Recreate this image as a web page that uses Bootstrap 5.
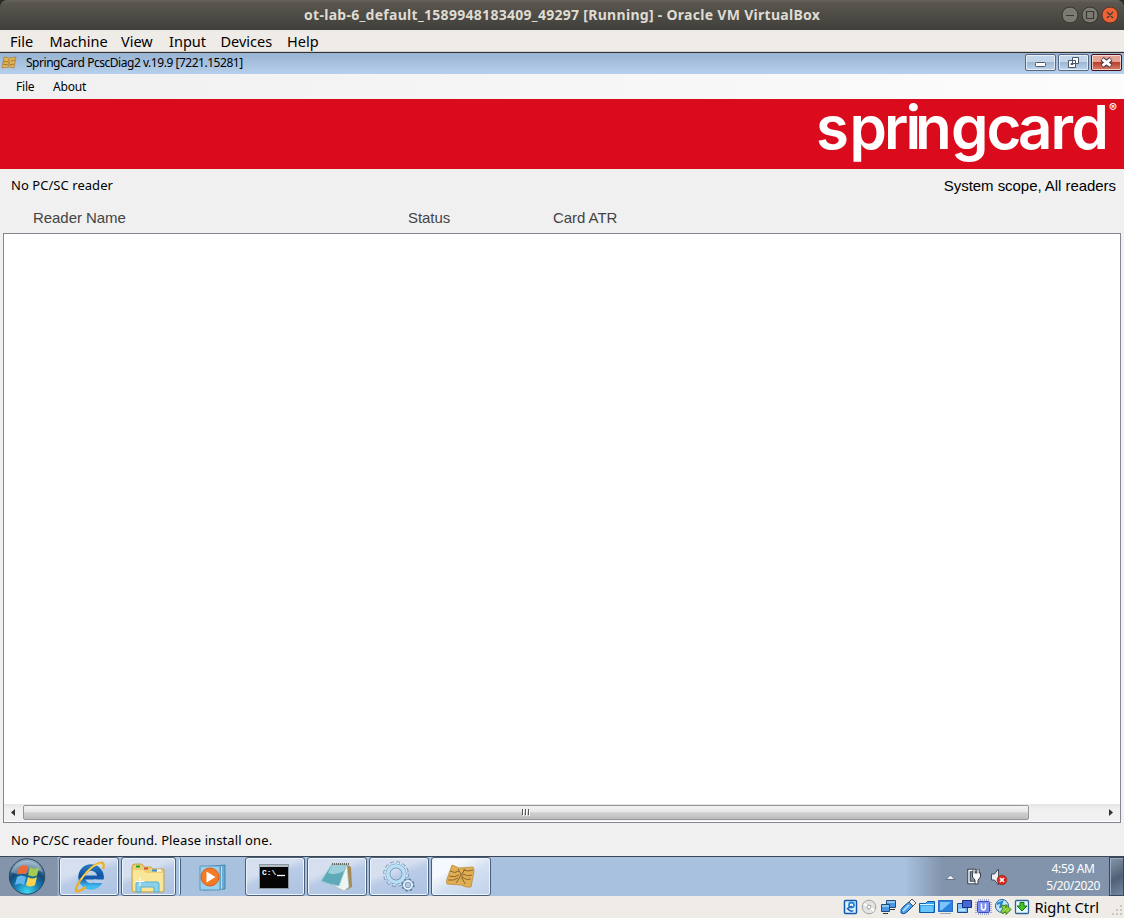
<!DOCTYPE html>
<html lang="en">
<head>
<meta charset="utf-8">
<meta name="viewport" content="width=device-width, initial-scale=1">
<title>ot-lab-6_default_1589948183409_49297 [Running] - Oracle VM VirtualBox</title>
<link rel="stylesheet" href="https://cdn.jsdelivr.net/npm/bootstrap@5.3.0/dist/css/bootstrap.min.css">
<style>
html,body{height:918px;overflow:hidden}
body{width:1124px;background:#2b2a28;font-family:"Noto Sans","Open Sans",sans-serif;color:#000;line-height:1;white-space:nowrap}
svg{display:block;flex:none;overflow:visible}
.host-title{height:30px;background:linear-gradient(#66635b 0,#59564f 3px,#403f3a);border-radius:7px 7px 0 0;color:#dfdbd2;font-size:14px;font-weight:700;letter-spacing:.29px}
.host-menu{height:23px;background:#efebe7;border-bottom:1px solid #33322f;box-shadow:inset 0 -1px #d3cfca;font-size:14.5px;padding-left:10px}
.win-title{height:21px;background:linear-gradient(#98b4d2,#b7cfea);font-size:12px}
.win-btn{height:17px;border:1px solid #58697f;border-radius:2px;box-shadow:inset 0 0 0 1px #ffffffa0;background:linear-gradient(#c3d5e9 0 45%,#9db8d4 50%,#bcd3ea)}
.win-btn.shut{border-color:#47111e;background:linear-gradient(#e5a394 0 45%,#b9402a 50%,#d7806c)}
.win-menu{height:25px;background:linear-gradient(90deg,#f0f0f0,#fcfcfc);font-size:12px;padding-left:16px}
.brand{height:70px;background:#d90b1d}
.panel{height:687px;background:#f0f0f0}
.scope{font:15px "Liberation Sans",sans-serif;letter-spacing:-.05px}
.heads{font:15px "Liberation Sans",sans-serif;color:#444;letter-spacing:-.05px}
.readers{height:590px;margin:0 3px;border:1px solid #828790;background:#fff}
.hscroll{height:17px;margin-bottom:1px;background:linear-gradient(#e4e4e4,#f0f0f0 30%,#f2f2f2)}
.thumb{width:1006px;height:15px;border:1px solid #979797;border-radius:2px;background:linear-gradient(#f4f4f4 0,#e6e6e6 45%,#d0d0d0 52%,#bdbdbd)}
.note{font-size:13px}
.taskbar{height:40px;border-top:1px solid #3c4755;background:linear-gradient(90deg,#8494aa 0 57px,#a8c1df 59px 905px,#8294ac 942px)}
.task{width:60px;height:39px;border:1px solid #4b5e78;border-radius:3px;box-shadow:inset 0 0 0 1px #edf4fc;background:linear-gradient(160deg,#d5dff0 0 35%,#b9cbe6 50%,#acc3e2)}
.task.current{background:linear-gradient(150deg,#f5f8fc 0 30%,#d4e0f1 55%,#bfd1ec)}
.clock{color:#fff;font-size:12px;line-height:17px}
.peek{width:15px;height:39px;border:1px solid #38475b;box-shadow:inset 1px 1px 0 #9babc0;background:linear-gradient(150deg,#8797ab,#506177 55%,#7689a1)}
.host-status{height:22px;background:#efebe7;font-size:14.7px}
</style>
</head>
<body>
<header class="host-title d-flex align-items-center">
  <span style="margin-left:304px">ot-lab-6_default_1589948183409_49297 [Running] - Oracle VM VirtualBox</span>
  <svg class="ms-auto" style="margin-right:5px" width="58" height="20">
    <g stroke="#34332f"><circle cx="9" cy="10" r="8" fill="#7c7a72"/><circle cx="29" cy="10" r="8" fill="#7c7a72"/><circle cx="49" cy="10" r="8" fill="#ed6236" stroke="#5c3021"/></g>
    <path d="M5 10.5h8M25.500 6.500h7v7h-7zM46 7l6 6m0-6-6 6" fill="none" stroke="#3b3934" stroke-width="1.2"/>
  </svg>
</header>
<nav class="host-menu d-flex align-items-center">
  <span style="width:39.500px">File</span><span style="width:71.500px">Machine</span><span style="width:48px">View</span><span style="width:51.500px">Input</span><span style="width:66.500px">Devices</span><span>Help</span>
</nav>
<div class="win-title d-flex align-items-center">
  <svg width="18" height="16" style="margin-right:8px;margin-top:-2px" viewBox="0 0 18 16"><path d="M4 2l5 1 7-1-2 11-5-1-7 1z" fill="#e2b257" stroke="#a57c35" stroke-width=".7"/><path d="M3 6l5 1M3 9l5 1m3-4 4-1m-5 5 4-1M9 4v7" fill="none" stroke="#8d6a2c" stroke-width=".8"/></svg>
  <span style="letter-spacing:-.47px;margin-top:-2px">SpringCard PcscDiag2 v.19.9 [7221.15281]</span>
  <div class="d-flex ms-auto" style="gap:2px;margin-right:2px;margin-top:-2px">
    <div class="win-btn" style="width:31px"><svg width="29" height="15"><rect x="9.500" y="7.500" width="10" height="4" rx="1" fill="#fff" stroke="#4c566b"/></svg></div>
    <div class="win-btn" style="width:31px"><svg width="29" height="15"><path d="M13.500 2.500h6v6h-6zM9.500 5.500h7v7h-7z" fill="#fff" stroke="#4c566b"/><path d="M12 8.500h2v1h-2z" fill="#7e9ebd" stroke="#4c566b"/></svg></div>
    <div class="win-btn shut" style="width:31px"><svg width="29" height="15"><path d="M10 4l9 7m0-7-9 7" stroke="#4c3747" stroke-width="5"/><path d="M10.500 4.300l8 6.400m0-6.400-8 6.400" stroke="#fff" stroke-width="2.800"/></svg></div>
  </div>
</div>
<nav class="win-menu d-flex align-items-center"><span style="width:37px;letter-spacing:-.2px">File</span><span style="letter-spacing:-.2px">About</span></nav>
<div class="brand d-flex justify-content-end">
  <svg width="324" height="70" fill="#fff" font-family="Inter,sans-serif">
    <text y="50" x="16 49.500 84 105.500 115 151 186.500 218 250.500 271.500" font-size="60" font-weight="600">springcard</text>
    <text x="309" y="13" font-size="12" font-weight="600">®</text>
  </svg>
</div>
<main class="panel d-flex flex-column">
  <div class="d-flex justify-content-between align-items-center" style="height:33px;padding:0 8px 0 11px">
    <span class="note" style="letter-spacing:.05px">No PC/SC reader</span><span class="scope">System scope, All readers</span>
  </div>
  <div class="heads d-flex align-items-center" style="height:31px;padding-left:33px"><span style="width:375px">Reader Name</span><span style="width:145px">Status</span><span>Card ATR</span></div>
  <div class="readers d-flex flex-column justify-content-end">
    <div class="hscroll d-flex align-items-center">
      <svg width="19" height="17"><path d="M11 5v7L7 8.500z" fill="#333"/></svg>
      <div class="thumb d-flex justify-content-center"><svg width="12" height="13"><path d="M2.500 3v6m3-6v6m3-6v6" stroke="#555"/><path d="M3.500 4v6m3-6v6m3-6v6" stroke="#fff"/></svg></div>
      <svg class="ms-auto" width="17" height="17"><path d="M6 5v7l4-3.500z" fill="#333"/></svg>
    </div>
  </div>
  <div class="note d-flex align-items-center flex-fill" style="padding:2px 0 0 11px;letter-spacing:.1px">No PC/SC reader found. Please install one.</div>
</main>
<div class="taskbar d-flex align-items-start">
  <svg width="57" height="39" style="margin-right:2px">
    <defs><radialGradient id="orb" cx=".5" cy=".95" r=".95"><stop stop-color="#3edcf4"/><stop offset=".35" stop-color="#1b83b8"/><stop offset=".65" stop-color="#124876"/><stop offset="1" stop-color="#9eb9cf"/></radialGradient></defs>
    <circle cx="27" cy="19.500" r="17.700" fill="url(#orb)" stroke="#29475f"/>
    <path d="M11 15a17 17 0 0 1 32 0q-8-3-16 1-8 3-16-1" fill="#fff" opacity=".3"/>
    <path d="M19 10q5-3 9-.5l-2 8q-5-2-9 .5z" fill="#ee6737"/><path d="M30 10q4 3 9 .5l-2 8q-5 2-9-.5z" fill="#a5cb50"/><path d="M17 20q4-3 9 0l-2 8q-4-3-9 0z" fill="#60b6ed"/><path d="M28 20q4 3 9 0l-2 8q-5 3-9 0z" fill="#ffd44c"/>
  </svg>
  <div class="task"><svg width="58" height="37"><defs><linearGradient id="ie" x2="0" y2="1"><stop stop-color="#2474bd"/><stop offset=".5" stop-color="#0b4c9d"/><stop offset="1" stop-color="#42bdf4"/></linearGradient></defs>
    <circle cx="31" cy="19" r="9.500" fill="none" stroke="url(#ie)" stroke-width="6.500"/><path d="M24 17.500h19.500v4H24z" fill="#145cab"/><path d="M34 21.500h11v3.500H34z" fill="#b9cbe6"/>
    <path d="M43 11c4-11-8-6-16 3C17 25 12 36 19 33q3-1 7-4" fill="none" stroke="#edad25" stroke-width="2.200"/><path d="M41 6c-5-1-15 7-20 16" fill="none" stroke="#ffe078"/></svg></div>
  <div class="task" style="width:55px;margin-left:2px"><svg width="53" height="37"><path d="M10 9q0-3 3-3h7l2 3h7l2 2h11v21q0 2-2 2H12q-2 0-2-2z" fill="#edd074" stroke="#c9a44e"/><path d="M11 12h10l3 3h17v18H11z" fill="#f8e699"/><path d="M14 7.500h4v2h-4z" fill="#18a634"/><path d="M22 9.500h4v2h-4z" fill="#d54b35"/><path d="M30 11.500h5v2h-5z" fill="#368ed7"/><path d="M35 11.500h4v2h-4z" fill="#fff"/><path d="M14 34v-8q0-2 2-2h19q2 0 2 2v8h-5v-5H19v5z" fill="#8bd1e9" stroke="#5aaecb"/><path d="M18 19v9m-4.500-4.500h9" stroke="#fff"/></svg></div>
  <div style="width:5px;height:39px;border-right:1px solid #4b5e78;border-radius:0 3px 3px 0;box-shadow:inset -1px 0 #edf4fc"></div>
  <svg width="65" height="39"><path d="M22 10l22-2v24l-22 1z" fill="#6aacd2" stroke="#4385ab"/><path d="M40.500 9v23" stroke="#b7dff2"/><path d="M19 9h20v24H19z" fill="#9bd0ec" stroke="#5898bf"/><circle cx="29" cy="20" r="9" fill="#f47a23" stroke="#df5a13"/><path d="M25.500 14.500v11l9-5.500z" fill="#fff"/></svg>
  <div class="task" style="margin-right:2px;margin-left:-1px"><svg width="58" height="37"><rect x="13.500" y="6.500" width="29" height="24" fill="#050505" stroke="#8c969e"/><path d="M14 7h28v2H14z" fill="#b5bdc4"/><text x="16" y="17" font-family="Liberation Mono,monospace" font-size="8" font-weight="700" fill="#fff">C:\</text><path d="M31 17.500h8" stroke="#fff" stroke-width="1.300"/></svg></div>
  <div class="task" style="margin-right:2px"><svg width="58" height="37"><path d="M38 6l5 3 1 20-6 3-4-4z" fill="#a58a55"/><path d="M39 7l2 22-5 4-12-6z" fill="#edf4f3" stroke="#a5b4b6" stroke-width=".7"/><path d="M24 6h15l-8 22q-9-1-18-5z" fill="#5faab9" stroke="#9bced3"/><path d="M24 7h14l-2 6q-9 5-16 2z" fill="#9ccfd9"/><path d="M24 6h17" stroke="#6c6c60" stroke-width="2" stroke-dasharray="1 1"/></svg></div>
  <div class="task" style="margin-right:2px"><svg width="58" height="37">
    <circle cx="26" cy="16" r="11" fill="none" stroke="#6f8fb0" stroke-width="3.600" stroke-dasharray="3.400 2.360"/><circle cx="26" cy="16" r="10.800" fill="none" stroke="#d3e9f6" stroke-width="2.400" stroke-dasharray="2.800 2.850" stroke-dashoffset="-.3"/><circle cx="26" cy="16" r="8" fill="none" stroke="#6f8fb0" stroke-width="4.600"/><circle cx="26" cy="16" r="8.200" fill="none" stroke="#b9e0f6" stroke-width="3.600"/>
    <circle cx="38" cy="27" r="5.600" fill="none" stroke="#5a7c9d" stroke-width="2" stroke-dasharray="2.200 2.200"/><circle cx="38" cy="27" r="4" fill="none" stroke="#5a7c9d" stroke-width="3"/><circle cx="38" cy="27" r="4" fill="none" stroke="#e0f3fb" stroke-width="2"/></svg></div>
  <div class="task current"><svg width="58" height="37"><path d="M20 7l7 3 14-1q1 1 1 5l-3 15q-4 1-10-2l-14-1q-1-3 0-5z" fill="#e0ae53" stroke="#bd8c3c" stroke-width=".8"/><path d="M18 13q5 3 9 0m-10 5q6 2 10-1M16 22q6 1 10-2m5-8q5 2 10 0m-10 4q5 3 9 1m-10 2q5 4 9 2M26 11l3 5-2 5-3 4m9-14-3 5v4l3 6" fill="none" stroke="#8d672c"/></svg></div>
  <svg class="ms-auto" width="70" height="39" style="margin-right:34px">
    <path d="M4 22.500 8.500 18l4.500 4.500z" fill="#f4f6f8" stroke="#647388"/>
    <path d="M34 13.500h-7v12h6" fill="none" stroke="#3a424c" stroke-width="3.400"/><path d="M34 13.500h-7v12h6" fill="none" stroke="#fff" stroke-width="1.400"/>
    <path d="M32 12v4m4-4v4" stroke="#3a424c" stroke-width="3"/><path d="M30.500 16h8v4l-2.500 3v4h-3v-4l-2.500-3z" fill="#fff" stroke="#3a424c"/><path d="M32 12.500V17m4-4.500V17" stroke="#fff" stroke-width="1.300"/>
    <path d="M49.500 17h3l4-5v16l-4-5h-3z" fill="#ecf0f3" stroke="#454d56"/><circle cx="60" cy="23" r="4.800" fill="#d8281e" stroke="#a1352f"/><path d="M58 21l4 4m0-4-4 4" stroke="#fff" stroke-width="1.600"/>
  </svg>
  <div class="clock d-flex flex-column align-items-center" style="margin:3px 9px 0 0;letter-spacing:-.35px"><span>4:59 AM</span><span>5/20/2020</span></div>
  <div class="peek"></div>
</div>
<footer class="host-status d-flex align-items-center justify-content-end">
  <svg width="190" height="20" style="margin-right:1px">
    <rect x="1.500" y="3.500" width="12" height="13" rx="1" fill="#dff3ff" stroke="#1258ac" stroke-width="1.500"/><circle cx="8.500" cy="8" r="2.500" fill="#fff" stroke="#2585d8" stroke-width="1.800"/><path d="M9 9l-4.500 2.500q3 4 6 2" fill="none" stroke="#155ba8" stroke-width="1.400"/>
    <circle cx="26" cy="10" r="6.800" fill="#e3e3e3" stroke="#a4a4a4"/><circle cx="26" cy="10" r="2" fill="#fff" stroke="#999"/><path d="M21 7l3 2m4 2 3 3" stroke="#fff" stroke-width="2"/>
    <path d="M43.500 3.500h9v7h-9z" fill="#4999e6" stroke="#234a7c"/><path d="M44 5h8" stroke="#d8f0ff"/><path d="M47 12.500h5" stroke="#333"/><path d="M38.500 7.500h8v7h-8z" fill="#4999e6" stroke="#234a7c"/><path d="M39 9h7" stroke="#d8f0ff"/><path d="M40 16.500h5" stroke="#333"/>
    <path d="M58 16q-1-4 3-7l5-4 4 4-6 6q-3 3-6 1z" fill="#4aa2ef" stroke="#154f95"/><path d="M66 5l3-3 4 4-3 3z" fill="#eee" stroke="#555"/><path d="M60 14l6-6" stroke="#c4e7ff" stroke-width="1.500"/>
    <path d="M76.500 15.500v-9h6l2-2h7v11z" fill="#36a4ef" stroke="#075aac"/><path d="M78 9h12v6H78z" fill="#6dc4fa"/><path d="M77 7.500h14" stroke="#dbf4ff"/>
    <rect x="95.500" y="3.500" width="14" height="11" fill="#2c82df" stroke="#2c6fc0"/><path d="M97 5h11l-9 8h-2z" fill="#7dc4fc"/><path d="M97 16.500h11" stroke="#9aa6b1"/>
    <path d="M114.500 6.500h10v9h-10z" fill="#79c1f7" stroke="#18478e"/><path d="M119.500 3.500h9v7h-9z" fill="#4767d4" stroke="#192f82"/><path d="M116 13h6" stroke="#fff"/>
    <path d="M135 3h11m-11 14h11M133 5v11m15-11v11" stroke="#8b96d8" stroke-width="1.500" stroke-dasharray="1 1"/><rect x="134.500" y="4.500" width="12" height="11" rx="1" fill="#7d90ee" stroke="#3a4cba"/><path d="M138.500 6.500V10q0 3 2 3t2-3V6.500" fill="none" stroke="#fff" stroke-width="1.500"/>
    <circle cx="159" cy="9" r="6.500" fill="#c4e6fa" stroke="#1761a4"/><path d="M154 7l5-2-2 6" fill="none" stroke="#2687cf" stroke-width="2.200"/><path d="M158 8.500q5-1 5 2v-3l5 5-5 5v-2.500q-3 0-3 2-4-3 0-5z" fill="#8fce3e" stroke="#367b1d"/>
    <rect x="172.500" y="3.500" width="13" height="13" rx="1" fill="#e6f9ff" stroke="#2c6496" stroke-width="1.300"/><path d="M177 5.500h4V9h3l-5 5-5-5h3z" fill="#47c425" stroke="#14721a"/>
  </svg>
  <span>Right Ctrl</span>
  <svg width="14" height="20" style="margin-left:11px"><path d="M11 8v2m0 2v2m0 2v2m-4-6v2m0 2v2m-4-2v2" stroke="#cbc6be" stroke-width="2"/></svg>
</footer>
<script src="https://cdn.jsdelivr.net/npm/bootstrap@5.3.0/dist/js/bootstrap.bundle.min.js"></script>
</body>
</html>
